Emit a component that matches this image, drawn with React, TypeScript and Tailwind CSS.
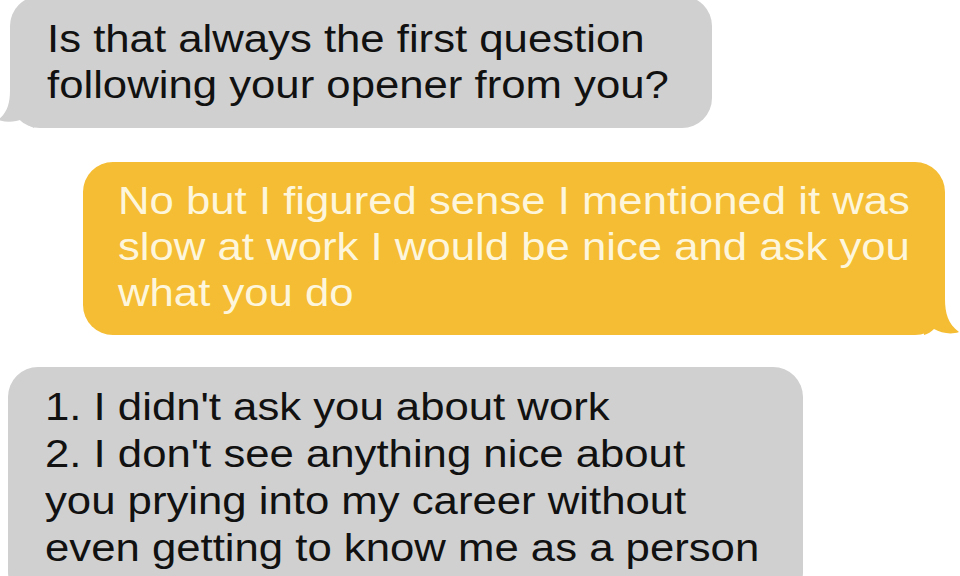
import React from "react";

const grey = "#d0d0d0";
const gold = "#f5bd33";

function Lines({ lines }: { lines: string[] }) {
  return (
    <>
      {lines.map((l, i) => (
        <div key={i} className="origin-left scale-x-115 whitespace-nowrap">
          {l}
        </div>
      ))}
    </>
  );
}

function TailLeft() {
  return (
    <svg
      className="absolute bottom-0 left-[-12px]"
      width="36"
      height="38"
      viewBox="0 0 36 38"
    >
      <path
        d="M12 0 C12 14 9 23 0 30 C9 33 18 32 24 29 C28 34 32 36 36 38 L36 0 Z"
        fill={grey}
      />
    </svg>
  );
}

function TailRight() {
  return (
    <svg
      className="absolute bottom-0 right-[-15px]"
      width="36"
      height="36"
      viewBox="0 0 36 36"
    >
      <path
        d="M21 0 C21 14 24 25 35 33 C27 36 17 34 10 30 C7 33 4 35 0 36 L0 0 Z"
        fill={gold}
      />
    </svg>
  );
}

export default function App() {
  return (
    <div className="h-[576px] w-[960px] overflow-hidden bg-white font-['Liberation_Sans',Arial,sans-serif] text-[38px] leading-[46px]">
      <div className="flex flex-col items-start">
        <div className="relative ml-[10px] -mt-[4px] w-[702px] rounded-[30px] bg-[#d0d0d0] pb-[20px] pl-[37px] pt-[20px] text-[#111111]">
          <TailLeft />
          <div className="relative">
            <Lines
              lines={[
                "Is that always the first question",
                "following your opener from you?",
              ]}
            />
          </div>
        </div>

        <div className="relative ml-[83px] mt-[34px] w-[862px] rounded-[30px] bg-[#f5bd33] pb-[19px] pl-[35px] pt-[16px] text-[#fdf6dc]">
          <TailRight />
          <div className="relative">
            <Lines
              lines={[
                "No but I figured sense I mentioned it was",
                "slow at work I would be nice and ask you",
                "what you do",
              ]}
            />
          </div>
        </div>

        <div className="relative ml-[8px] mt-[32px] w-[795px] rounded-[30px] bg-[#d0d0d0] pb-[30px] pl-[37px] pt-[17px] leading-[47px] text-[#111111]">
          <Lines
            lines={[
              "1. I didn't ask you about work",
              "2. I don't see anything nice about",
              "you prying into my career without",
              "even getting to know me as a person",
            ]}
          />
        </div>
      </div>
    </div>
  );
}
